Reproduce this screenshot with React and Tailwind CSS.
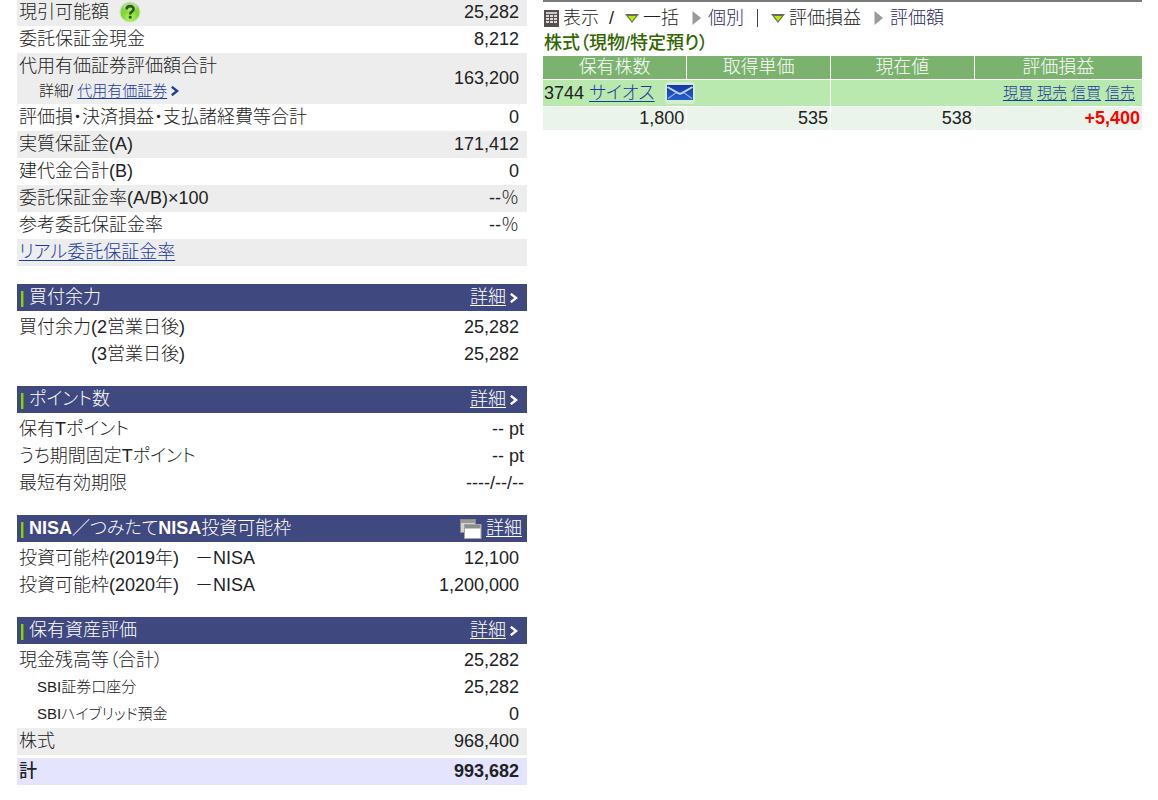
import React from "react";

function Chevron({ className }) {
  return (
    <svg width="8" height="10" viewBox="0 0 8 10" fill="none" stroke="currentColor" strokeWidth="2.4" className={className} aria-hidden="true">
      <path d="M0.8 0.8 L6.2 5 L0.8 9.2" />
    </svg>
  );
}

function HelpIcon() {
  return (
    <svg width="22" height="22" viewBox="0 0 22 22" aria-hidden="true">
      <defs>
        <radialGradient id="helpFill" cx="0.5" cy="0.8" r="0.75">
          <stop offset="0" stopColor="#b9f46a" />
          <stop offset="0.55" stopColor="#7fd62e" />
          <stop offset="1" stopColor="#8fce62" />
        </radialGradient>
      </defs>
      <circle cx="11" cy="11" r="10.6" fill="#cfe8bd" />
      <circle cx="11" cy="11" r="9.6" fill="url(#helpFill)" />
      <ellipse cx="11" cy="6" rx="7" ry="4" fill="#ffffff" opacity="0.3" />
      <path d="M7.6 8.4 C7.6 4 14.6 4.200 14.600 8 C14.600 10.600 11.200 10.400 11.200 13.400" fill="none" stroke="#2b5a1e" strokeWidth="2.6" />
      <rect x="9.800" y="14.800" width="2.800" height="2.800" fill="#2b5a1e" />
    </svg>
  );
}

function WindowsIcon() {
  return (
    <svg width="22" height="20" viewBox="0 0 22 20" aria-hidden="true">
      <rect x="0.500" y="0.500" width="15" height="13" fill="#d2d2d2" stroke="#8b8b8b" />
      <rect x="1" y="1" width="14" height="3" fill="#989898" />
      <rect x="4.500" y="5.500" width="16.500" height="14" fill="#ffffff" stroke="#a5a5a5" />
      <rect x="5" y="6" width="15.500" height="3.500" fill="#8c8c8c" />
    </svg>
  );
}

function SheetIcon() {
  return (
    <svg width="15" height="17" viewBox="0 0 15 17" aria-hidden="true">
      <rect x="0" y="0" width="15" height="17" fill="#565050" />
      <rect x="2" y="2" width="11" height="2" fill="#c9c6c6" />
      <g fill="#dcd8d8">
        <rect x="2" y="5" width="3" height="2" /><rect x="6" y="5" width="3" height="2" /><rect x="10" y="5" width="3" height="2" />
        <rect x="2" y="8" width="3" height="2" /><rect x="6" y="8" width="3" height="2" /><rect x="10" y="8" width="3" height="2" />
        <rect x="2" y="11" width="3" height="2" /><rect x="6" y="11" width="3" height="2" /><rect x="10" y="11" width="3" height="2" />
      </g>
    </svg>
  );
}

function DownMark() {
  return (
    <svg width="14" height="9" viewBox="0 0 14 9" aria-hidden="true">
      <path d="M0 0 H14 L7 9 Z" fill="#6b6b55" />
      <path d="M3 2 H11 L7 7.200 Z" fill="#b4f000" />
    </svg>
  );
}

function RightMark() {
  return (
    <svg width="9" height="14" viewBox="0 0 9 14" aria-hidden="true">
      <path d="M0.500 0 L9 7 L0.500 14 Z" fill="#9a9a9a" />
    </svg>
  );
}

function MailIcon() {
  return (
    <svg width="30" height="22" viewBox="0 0 30 22" aria-hidden="true">
      <defs>
        <linearGradient id="mailFill" x1="0" y1="0" x2="0" y2="1">
          <stop offset="0" stopColor="#1437a8" />
          <stop offset="1" stopColor="#2460c8" />
        </linearGradient>
      </defs>
      <rect x="0" y="0" width="30" height="22" rx="3" fill="#d3ecd2" />
      <rect x="2" y="3" width="26" height="15" fill="url(#mailFill)" />
      <path d="M2.500 5 L13 11.200 Q15 12.200 17 11.200 L27.500 5" fill="none" stroke="#c3d3f2" strokeWidth="2" />
      <path d="M3 16.500 L11.500 10.600 M27 16.500 L18.500 10.600" fill="none" stroke="#8fb0ea" strokeWidth="1.200" />
    </svg>
  );
}

function Bar({ title, windows }) {
  return (
    <div className="flex h-[27px] items-center justify-between bg-[#404880] pl-1 pr-[5px] text-white">
      <h2 className="flex items-center gap-[5px]">
        <span className="mt-0.5 h-4 w-[3px] border-r border-[#5c8a2c] bg-[#8ed000]" />
        <span className="pb-0.5">{title}</span>
      </h2>
      <a href="#detail" className="flex items-center gap-1">
        {windows && <WindowsIcon />}
        <span className="pb-0.5 underline underline-offset-2">詳細</span>
        {!windows && <Chevron className="mr-1" />}
      </a>
    </div>
  );
}

function Row({ label, value, shade, flush, small }) {
  return (
    <tr className={shade ? "bg-[#ededed]" : ""}>
      <th scope="row" className={`h-[27px] pb-0.5 pt-0 text-left font-light ${small ? "pl-5 text-[15px]" : "pl-0.5"}`}>{label}</th>
      <td className={`pb-0.5 pt-0 text-right ${flush ? "pr-[3px]" : "pr-2"}`}>{value}</td>
    </tr>
  );
}

function Section({ title, windows, children }) {
  return (
    <section className="mt-[18px]">
      <Bar title={title} windows={windows} />
      <table className="mt-[3px] w-full border-separate border-spacing-0">
        <tbody>{children}</tbody>
      </table>
    </section>
  );
}

function Account() {
  return (
    <div className="-mt-px min-w-0">
      <table className="w-full border-separate border-spacing-0">
        <tbody>
          <Row
            shade
            label={
              <span className="flex items-center gap-2.5">
                現引可能額
                <button type="button" aria-label="ヘルプ"><HelpIcon /></button>
              </span>
            }
            value="25,282"
          />
          <Row label="委託保証金現金" value="8,212" />
          <Row
            shade
            label={
              <span className="flex h-[49px] flex-col">
                <span className="leading-[27px]">代用有価証券評価額合計</span>
                <span className="flex items-center pl-5 text-[15px] leading-[22px]">
                  詳細/
                  <a href="#securities" className="ml-1 flex items-center gap-1 text-[#1c3a9e]">
                    <span className="underline underline-offset-2">代用有価証券</span>
                    <Chevron />
                  </a>
                </span>
              </span>
            }
            value="163,200"
          />
          <Row label="評価損・決済損益・支払諸経費等合計" value="0" />
          <Row shade label="実質保証金(A)" value="171,412" />
          <Row label="建代金合計(B)" value="0" />
          <Row shade label="委託保証金率(A/B)×100" value="--％" />
          <Row label="参考委託保証金率" value="--％" />
          <Row shade label={<a href="#real" className="text-[#1c3a9e] underline underline-offset-2">リアル委託保証金率</a>} />
        </tbody>
      </table>

      <Section title="買付余力">
        <Row label="買付余力(2営業日後)" value="25,282" />
        <Row label={<span className="pl-[72px]">(3営業日後)</span>} value="25,282" />
      </Section>

      <Section title="ポイント数">
        <Row flush label="保有Tポイント" value="-- pt" />
        <Row flush label="うち期間固定Tポイント" value="-- pt" />
        <Row flush label="最短有効期限" value="----/--/--" />
      </Section>

      <Section
        windows
        title={<><span className="font-bold">NISA</span>／つみたて<span className="font-bold">NISA</span>投資可能枠</>}
      >
        <Row label={<>投資可能枠(2019年)<span className="ml-4">－NISA</span></>} value="12,100" />
        <Row label={<>投資可能枠(2020年)<span className="ml-4">－NISA</span></>} value="1,200,000" />
      </Section>

      <Section title="保有資産評価">
        <Row label="現金残高等（合計）" value="25,282" />
        <Row small label="SBI証券口座分" value="25,282" />
        <Row small label="SBIハイブリッド預金" value="0" />
        <Row shade label="株式" value="968,400" />
        <tr className="bg-[#e4e4ff] font-bold">
          <th scope="row" className="h-[30px] border-t-[3px] border-white pb-0.5 pl-0.5 pt-0 text-left font-medium">計</th>
          <td className="border-t-[3px] border-white pb-0.5 pr-2 pt-0 text-right">993,682</td>
        </tr>
      </Section>
    </div>
  );
}

const HEADS = ["保有株数", "取得単価", "現在値", "評価損益"];
const TRADES = ["現買", "現売", "信買", "信売"];

function Holdings() {
  return (
    <div className="min-w-0 border-t-2 border-[#7a7a7a]">
      <nav className="flex h-8 items-center pl-px">
        <SheetIcon />
        <span className="ml-1">表示</span>
        <span className="ml-2.5">/</span>
        <span className="ml-[11px] flex items-center gap-1"><DownMark />一括</span>
        <a href="#each" className="ml-[13px] flex items-center gap-[7px] text-[#2a2a66]"><RightMark />個別</a>
        <span className="mx-[13px] h-[18px] w-px bg-[#444444]" />
        <span className="flex items-center gap-1"><DownMark />評価損益</span>
        <a href="#value" className="ml-[13px] flex items-center gap-[7px] text-[#2a2a66]"><RightMark />評価額</a>
      </nav>
      <h2 className="h-[22px] pl-px font-medium leading-[18px] text-[#336600]">株式（現物/特定預り）</h2>
      <table className="w-full table-fixed border-collapse">
        <thead>
          <tr className="bg-[#7ab26e] text-white">
            {HEADS.map((h, i) => (
              <th key={h} scope="col" className={`h-[23px] py-0 font-light ${i === 3 ? "w-[28%]" : "w-[24%]"} ${i ? "border-l border-white" : ""}`}>{h}</th>
            ))}
          </tr>
        </thead>
        <tbody>
          <tr className="border-t border-white bg-[#b9e9ae]">
            <td colSpan={2} className="h-[27px] py-0 pl-px">
              <span className="flex items-center">
                3744
                <a href="#stock" className="ml-[5px] text-[#1c3a9e] underline underline-offset-2">サイオス</a>
                <button type="button" aria-label="メール" className="ml-2.5"><MailIcon /></button>
              </span>
            </td>
            <td colSpan={2} className="border-l border-white py-0 pr-[7px]">
              <span className="flex justify-end gap-1 text-[15px]">
                {TRADES.map((t) => (
                  <a key={t} href="#trade" className="text-[#1c3a9e] underline underline-offset-2">{t}</a>
                ))}
              </span>
            </td>
          </tr>
          <tr className="border-t border-white bg-[#eaf4ea] text-right">
            <td className="h-6 py-0 pr-0.5">1,800</td>
            <td className="border-l border-white py-0 pr-0.5">535</td>
            <td className="border-l border-white py-0 pr-0.5">538</td>
            <td className="border-l border-white py-0 pr-0.5 font-bold text-[#ff0000]">+5,400</td>
          </tr>
        </tbody>
      </table>
    </div>
  );
}

export default function App() {
  return (
    <main
      lang="ja"
      className="grid grid-cols-[510fr_599fr] items-start gap-4 bg-white pl-[17px] pr-4 font-['Liberation_Sans','Noto_Sans_CJK_JP',sans-serif] text-[18px] font-light leading-[22px] text-[#222222] [font-feature-settings:'palt']"
    >
      <Account />
      <Holdings />
    </main>
  );
}
